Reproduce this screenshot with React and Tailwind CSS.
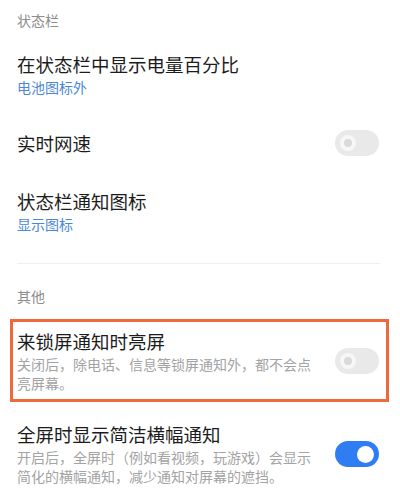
import React, { useState } from "react";

const FONT = { fontFamily: '"Noto Sans CJK SC", "Noto Sans", sans-serif' };

// iOS-ish switch used in the settings list
const Switch = ({ on, onToggle }) => (
  <button
    onClick={onToggle}
    className={`relative flex-shrink-0 w-[44px] h-[26px] rounded-full flex items-center px-[5px] ${
      on ? "bg-[#2f7df3] justify-end" : "bg-[#e9e9e9] justify-start"
    }`}
  >
    {on ? (
      <span className="w-[17px] h-[17px] rounded-full bg-white" />
    ) : (
      <span className="w-[16px] h-[16px] rounded-full bg-[#dadada] border-[4px] border-[#f7f7f7]" />
    )}
  </button>
);

const SectionTitle = ({ children, className = "" }) => (
  <div className={`px-[17px] text-[14px] leading-[20px] text-[#8c8c8c] ${className}`}>
    {children}
  </div>
);

const Row = ({ title, sub, subColor = "gray", toggle, on, onToggle, className = "" }) => (
  <div className={`flex items-center gap-[20px] ${className}`}>
    <div className="flex-1 min-w-0">
      <div className="text-[18.5px] leading-[24px] text-[#1c1c1c]">{title}</div>
      {sub && (
        <div
          className={`mt-[2px] text-[14px] leading-[19px] ${
            subColor === "blue" ? "text-[#4a88d4]" : "text-[#a3a3a3]"
          }`}
        >
          {sub}
        </div>
      )}
    </div>
    {toggle && <Switch on={on} onToggle={onToggle} />}
  </div>
);

export default function App() {
  const [netSpeed, setNetSpeed] = useState(false);
  const [wakeOnLock, setWakeOnLock] = useState(false);
  const [banner, setBanner] = useState(true);

  return (
    <div className="w-[400px] h-[493px] overflow-hidden bg-white" style={FONT}>
      {/* 状态栏 */}
      <SectionTitle className="pt-[10px]">状态栏</SectionTitle>

      <Row
        className="pt-[22px] pl-[17px] pr-[21px]"
        title="在状态栏中显示电量百分比"
        sub="电池图标外"
        subColor="blue"
      />
      <Row
        className="pt-[33px] pl-[17px] pr-[21px]"
        title="实时网速"
        toggle
        on={netSpeed}
        onToggle={() => setNetSpeed(!netSpeed)}
      />
      <Row
        className="pt-[33px] pl-[17px] pr-[21px]"
        title="状态栏通知图标"
        sub="显示图标"
        subColor="blue"
      />

      <div className="mt-[29px] mx-[17px] mr-[20px] h-px bg-[#efefef]" />

      {/* 其他 */}
      <SectionTitle className="pt-[22px]">其他</SectionTitle>

      <div className="mt-[13px] ml-[10px] mr-[11px] border-[3px] border-[#ef6a3b]">
        <Row
          className="pt-[7px] pb-[6px] pl-[4px] pr-[7px]"
          title="来锁屏通知时亮屏"
          sub="关闭后，除电话、信息等锁屏通知外，都不会点亮屏幕。"
          toggle
          on={wakeOnLock}
          onToggle={() => setWakeOnLock(!wakeOnLock)}
        />
      </div>

      <Row
        className="pt-[20px] pl-[17px] pr-[21px]"
        title="全屏时显示简洁横幅通知"
        sub="开启后，全屏时（例如看视频，玩游戏）会显示简化的横幅通知，减少通知对屏幕的遮挡。"
        toggle
        on={banner}
        onToggle={() => setBanner(!banner)}
      />
    </div>
  );
}
